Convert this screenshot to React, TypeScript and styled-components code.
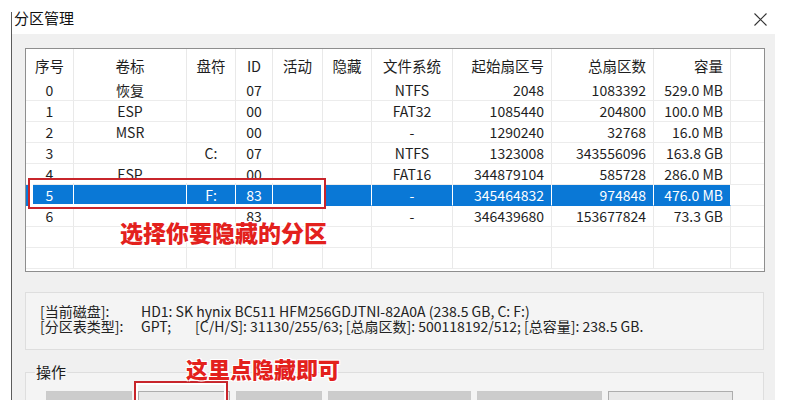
import React from 'react';
import styled, { createGlobalStyle } from 'styled-components';

const Global = createGlobalStyle`
  html, body { margin: 0; padding: 0; background: #ffffff; }
  body {
    font-family: "Noto Sans CJK SC", "Noto Sans", sans-serif;
    color: #1b1b1b;
    width: 785px;
    height: 400px;
    overflow: hidden;
  }
  * { box-sizing: border-box; }
`;

const Screen = styled.div`
  position: relative;
  width: 785px;
  height: 400px;
  overflow: hidden;
  display: flex;
  background: #ffffff;
`;

const Gutter = styled.div`
  width: 11px;
  flex: none;
`;

const FrameLine = styled.div`
  width: 1px;
  flex: none;
  margin-top: 12px;
  background: #5c5c5c;
`;

const Window = styled.div`
  flex: 1;
  display: flex;
  flex-direction: column;
  min-width: 0;
`;

const TitleBar = styled.div`
  height: 34px;
  flex: none;
  display: flex;
  align-items: center;
  justify-content: space-between;
  padding: 0 18px 0 2px;
  background: #ffffff;
`;

const Title = styled.div`
  font-size: 15px;
  line-height: 18px;
  color: #111;
  margin-top: 1px;
`;

const CloseIcon = styled.svg`
  width: 13px;
  height: 13px;
  margin-top: 4px;
`;

const Body = styled.div`
  flex: 1;
  display: flex;
`;

const Panel = styled.div`
  width: 763px;
  flex: none;
  background: #f0f0f0;
  padding: 14px 11px 0 13px;
  display: flex;
  flex-direction: column;
`;

const TableBox = styled.div`
  width: 740px;
  height: 224px;
  border: 1px solid #8e8e8e;
  background: #ffffff;
  overflow: hidden;
`;

const cols = '48px 113px 49px 37px 50px 49px 81px 99px 102px 77px 1fr';

const HeaderRow = styled.div`
  display: grid;
  grid-template-columns: ${cols};
  height: 31px;
`;

const Row = styled.div`
  display: grid;
  grid-template-columns: ${cols};
  height: 21px;
`;

const Cell = styled.div<{ $align: 'center' | 'right'; $sel?: boolean; $head?: boolean }>`
  display: flex;
  align-items: center;
  justify-content: ${(p) => (p.$align === 'right' ? 'flex-end' : 'center')};
  padding: ${(p) => (p.$align === 'right' ? '0 7px 0 0' : '0')};
  padding-top: ${(p) => (p.$head ? '2px' : '0')};
  font-size: ${(p) => (p.$head ? '14.5px' : '14px')};
  line-height: 18px;
  white-space: nowrap;
  overflow: hidden;
  color: ${(p) => (p.$sel ? '#ffffff' : '#1e1e1e')};
  background: ${(p) => (p.$sel ? '#0a78d6' : '#ffffff')};
  border-right: 1px solid ${(p) => (p.$sel ? '#ffffff' : '#e9e9e9')};
  border-bottom: ${(p) => (p.$head ? 'none' : `1px solid ${p.$sel ? '#0a78d6' : '#ececec'}`)};
`;

const FillCell = styled.div<{ $head?: boolean }>`
  background: #ffffff;
  border-bottom: ${(p) => (p.$head ? 'none' : '1px solid #ececec')};
`;

const InfoBox = styled.div`
  margin-top: 20px;
  width: 739px;
  height: 58px;
  border: 1px solid #dedede;
  background: #f4f4f4;
  padding: 11px 0 0 14px;
  display: grid;
  grid-template-columns: 101px 1fr;
  grid-auto-rows: 15px;
  font-size: 14px;
  line-height: 15px;
  color: #222;
  white-space: nowrap;
`;

const Gap = styled.span`
  display: inline-block;
  width: 24px;
`;

const Group = styled.fieldset`
  margin: 13px 0 0 0;
  width: 739px;
  border: 1px solid #dedede;
  background: #f4f4f4;
  padding: 1px 10px 0 10px;
  min-inline-size: 0;
`;

const Legend = styled.legend`
  font-size: 15px;
  line-height: 18px;
  padding: 0 1px;
  margin-left: -1px;
  color: #1b1b1b;
`;

const ButtonRow = styled.div`
  display: flex;
  gap: 6px;
  padding: 9px 0 0 10px;
`;

const Btn = styled.div<{ $w: number; $enabled?: boolean }>`
  width: ${(p) => p.$w}px;
  height: 26px;
  flex: none;
  display: flex;
  align-items: center;
  justify-content: center;
  font-size: 14px;
  line-height: 24px;
  padding-top: 5px;
  border: 1px solid ${(p) => (p.$enabled ? '#adadad' : '#cbcbcb')};
  background: ${(p) => (p.$enabled ? '#e8e8e8' : '#cccccc')};
  color: ${(p) => (p.$enabled ? '#111' : '#808080')};
  white-space: nowrap;
`;

const RightMargin = styled.div`
  flex: 1;
  background: #ffffff;
`;

const RedFrame = styled.div<{ $inner: number }>`
  position: absolute;
  border: 2px solid #c8252b;
  box-shadow: inset 0 0 0 ${(p) => p.$inner}px #ffffff;
  pointer-events: none;
`;

const Note = styled.div<{ $size: number }>`
  position: absolute;
  font-family: "Noto Sans CJK SC", sans-serif;
  font-weight: 900;
  font-size: ${(p) => p.$size}px;
  line-height: ${(p) => p.$size}px;
  color: #e3211d;
  white-space: nowrap;
  text-shadow: 0 0 2px #ffffff, 1px 1px 0 #fff, -1px -1px 0 #fff, 1px -1px 0 #fff, -1px 1px 0 #fff;
`;

type Align = 'center' | 'right';
const aligns: Align[] = ['center', 'center', 'center', 'center', 'center', 'center', 'center', 'right', 'right', 'right'];
const headers = ['序号', '卷标', '盘符', 'ID', '活动', '隐藏', '文件系统', '起始扇区号', '总扇区数', '容量'];
const rows: string[][] = [
  ['0', '恢复', '', '07', '', '', 'NTFS', '2048', '1083392', '529.0 MB'],
  ['1', 'ESP', '', '00', '', '', 'FAT32', '1085440', '204800', '100.0 MB'],
  ['2', 'MSR', '', '00', '', '', '-', '1290240', '32768', '16.0 MB'],
  ['3', '', 'C:', '07', '', '', 'NTFS', '1323008', '343556096', '163.8 GB'],
  ['4', 'ESP', '', '00', '', '', 'FAT16', '344879104', '585728', '286.0 MB'],
  ['5', '', 'F:', '83', '', '', '-', '345464832', '974848', '476.0 MB'],
  ['6', '', '', '83', '', '', '-', '346439680', '153677824', '73.3 GB'],
  ['', '', '', '', '', '', '', '', '', ''],
  ['', '', '', '', '', '', '', '', '', ''],
];
const selected = 5;

const buttons: { label: string; w: number; enabled?: boolean }[] = [
  { label: '分配(A)', w: 86 },
  { label: '隐藏(H)', w: 92, enabled: true },
  { label: '删除(D)', w: 86 },
  { label: '更改分区标签(L)', w: 143 },
  { label: '设为活动(S)', w: 125 },
  { label: '保存更改(C)', w: 125, enabled: true },
];

export default function App() {
  return (
    <Screen>
      <Global />
      <Gutter />
      <FrameLine />
      <Window>
        <TitleBar>
          <Title>分区管理</Title>
          <CloseIcon viewBox="0 0 13 13">
            <path d="M0.5 0.5 L12.5 12.5 M12.5 0.5 L0.5 12.5" stroke="#333" strokeWidth="1.1" fill="none" />
          </CloseIcon>
        </TitleBar>
        <Body>
          <Panel>
            <TableBox>
              <HeaderRow>
                {headers.map((h, i) => (
                  <Cell key={h} $align={aligns[i]} $head>
                    {h}
                  </Cell>
                ))}
                <FillCell $head />
              </HeaderRow>
              {rows.map((r, ri) => (
                <Row key={ri}>
                  {r.map((c, ci) => (
                    <Cell key={ci} $align={aligns[ci]} $sel={ri === selected}>
                      {c}
                    </Cell>
                  ))}
                  <FillCell />
                </Row>
              ))}
            </TableBox>
            <InfoBox>
              <span>[当前磁盘]:</span>
              <span>HD1: SK hynix BC511 HFM256GDJTNI-82A0A (238.5 GB, C: F:)</span>
              <span>[分区表类型]:</span>
              <span>
                GPT;
                <Gap />
                [C/H/S]: 31130/255/63; [总扇区数]: 500118192/512; [总容量]: 238.5 GB.
              </span>
            </InfoBox>
            <Group>
              <Legend>操作</Legend>
              <ButtonRow>
                {buttons.map((b) => (
                  <Btn key={b.label} $w={b.w} $enabled={b.enabled}>
                    {b.label}
                  </Btn>
                ))}
              </ButtonRow>
            </Group>
          </Panel>
          <RightMargin />
        </Body>
      </Window>
      <RedFrame $inner={3} style={{ left: 28, top: 178, width: 298, height: 31 }} />
      <RedFrame $inner={2} style={{ left: 134, top: 381, width: 94, height: 30 }} />
      <Note $size={23} style={{ left: 120, top: 221 }}>选择你要隐藏的分区</Note>
      <Note $size={22} style={{ left: 186, top: 357 }}>这里点隐藏即可</Note>
    </Screen>
  );
}
